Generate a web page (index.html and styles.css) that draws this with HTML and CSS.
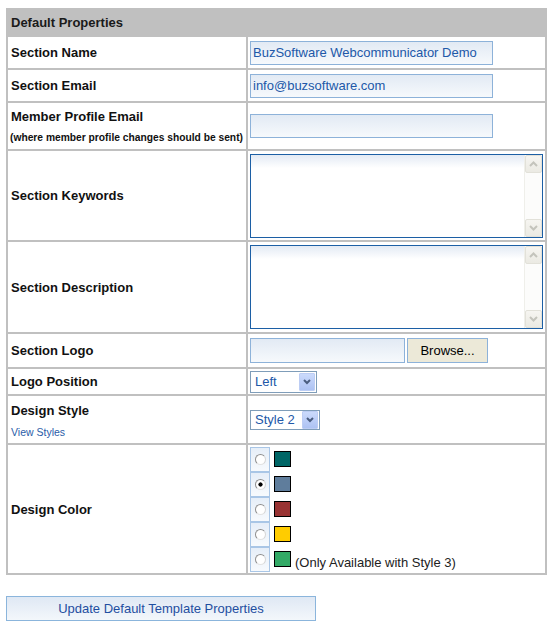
FILE: index.html
```html
<!DOCTYPE html>
<html>
<head>
<meta charset="utf-8">
<title>Default Properties</title>
<link rel="stylesheet" href="styles.css">
</head>
<body>
<form class="page">
<table class="props">
  <colgroup><col class="col-l"><col class="col-r"></colgroup>
  <tr class="h-head"><th colspan="2">Default Properties</th></tr>
  <tr class="h31">
    <td class="lbl">Section Name</td>
    <td class="fld"><input class="txt" type="text" value="BuzSoftware Webcommunicator Demo"></td>
  </tr>
  <tr class="h31">
    <td class="lbl">Section Email</td>
    <td class="fld"><input class="txt" type="text" value="info@buzsoftware.com"></td>
  </tr>
  <tr class="h46">
    <td class="lbl"><span class="title">Member Profile Email</span><span class="note">(where member profile changes should be sent)</span></td>
    <td class="fld"><input class="txt" type="text" value=""></td>
  </tr>
  <tr class="h89">
    <td class="lbl">Section Keywords</td>
    <td class="fld">
      <div class="ta">
        <textarea></textarea>
        <div class="sb">
          <span class="sbtn"><svg width="9" height="6" viewBox="0 0 9 6"><polyline points="1,5 4.5,1.5 8,5" fill="none" stroke="#c4c4bc" stroke-width="2"/></svg></span>
          <span class="sbtn"><svg width="9" height="6" viewBox="0 0 9 6"><polyline points="1,1 4.5,4.5 8,1" fill="none" stroke="#c4c4bc" stroke-width="2"/></svg></span>
        </div>
      </div>
    </td>
  </tr>
  <tr class="h90">
    <td class="lbl">Section Description</td>
    <td class="fld">
      <div class="ta">
        <textarea></textarea>
        <div class="sb">
          <span class="sbtn"><svg width="9" height="6" viewBox="0 0 9 6"><polyline points="1,5 4.5,1.5 8,5" fill="none" stroke="#c4c4bc" stroke-width="2"/></svg></span>
          <span class="sbtn"><svg width="9" height="6" viewBox="0 0 9 6"><polyline points="1,1 4.5,4.5 8,1" fill="none" stroke="#c4c4bc" stroke-width="2"/></svg></span>
        </div>
      </div>
    </td>
  </tr>
  <tr class="h33">
    <td class="lbl">Section Logo</td>
    <td class="fld"><div class="filerow"><input class="txt file" type="text" value=""><button type="button" class="browse">Browse...</button></div></td>
  </tr>
  <tr class="h25">
    <td class="lbl">Logo Position</td>
    <td class="fld">
      <div class="sel sel-pos"><span class="val">Left</span><span class="arr"><svg width="8" height="6" viewBox="0 0 8 6"><polyline points="1,1 4,4 7,1" fill="none" stroke="#4a5d80" stroke-width="2"/></svg></span></div>
    </td>
  </tr>
  <tr class="h47">
    <td class="lbl"><span class="title">Design Style</span><a class="link" href="#">View Styles</a></td>
    <td class="fld">
      <div class="sel sel-style"><span class="val">Style 2</span><span class="arr"><svg width="8" height="6" viewBox="0 0 8 6"><polyline points="1,1 4,4 7,1" fill="none" stroke="#4a5d80" stroke-width="2"/></svg></span></div>
    </td>
  </tr>
  <tr class="h128">
    <td class="lbl">Design Color</td>
    <td class="fld">
      <div class="colors">
        <label class="opt"><span class="rb"><input type="radio" name="color"></span><span class="sw c1"></span></label>
        <label class="opt"><span class="rb"><input type="radio" name="color" checked></span><span class="sw c2"></span></label>
        <label class="opt"><span class="rb"><input type="radio" name="color"></span><span class="sw c3"></span></label>
        <label class="opt"><span class="rb"><input type="radio" name="color"></span><span class="sw c4"></span></label>
        <label class="opt"><span class="rb"><input type="radio" name="color"></span><span class="sw c5"></span><span class="only">(Only Available with Style 3)</span></label>
      </div>
    </td>
  </tr>
</table>
<button type="button" class="update">Update Default Template Properties</button>
</form>
</body>
</html>
```

FILE: styles.css
```css
html, body {
  background: #ffffff;
}
body {
  margin: 8px 5px 0 6px;
  font-family: "Liberation Sans", Arial, sans-serif;
  font-size: 13px;
  color: #111111;
}
.page {
  margin: 0;
}
.props {
  width: 541px;
  border-collapse: separate;
  border-spacing: 2px;
  background: #c0c0c0;
  table-layout: fixed;
}
.col-l { width: 238px; }
.col-r { width: 297px; }
.props th {
  background: #c0c0c0;
  text-align: left;
  font-weight: bold;
  padding: 0 3px;
  color: #1a1a1a;
  font-size: 13px;
}
.props td {
  background: #ffffff;
  vertical-align: middle;
}
.h-head { height: 25px; }
.h31 { height: 31px; }
.h46 { height: 46px; }
.h89 { height: 89px; }
.h90 { height: 90px; }
.h33 { height: 33px; }
.h25 { height: 25px; }
.h47 { height: 47px; }
.h128 { height: 128px; }

td.lbl {
  padding: 1px 3px 0 3px;
  font-weight: bold;
  line-height: 16px;
}
td.fld {
  padding: 0 2px;
}
.title {
  display: block;
  line-height: 16px;
}
.note {
  display: block;
  margin-top: 7px;
  font-size: 10.25px;
  line-height: 12px;
  margin-left: -1px;
}
.link {
  display: block;
  margin-top: 7px;
  font-size: 10.5px;
  line-height: 12px;
  font-weight: normal;
  color: #2a5ca8;
  text-decoration: none;
}

.txt {
  display: block;
  box-sizing: border-box;
  width: 243px;
  height: 24px;
  margin: 0;
  padding: 0 2px;
  border: 1px solid #8db2d9;
  background: linear-gradient(#e2eaf4, #f6f9fc);
  font-family: "Liberation Sans", Arial, sans-serif;
  font-size: 13px;
  color: #2158a8;
  outline: none;
}
.filerow {
  display: flex;
  gap: 2px;
  align-items: center;
}
.txt.file {
  width: 155px;
  height: 25px;
}
.browse {
  box-sizing: border-box;
  width: 81px;
  height: 25px;
  margin: 0;
  padding: 0;
  border: 1px solid #8db2d9;
  background: #ece9d8;
  font-family: "Liberation Sans", Arial, sans-serif;
  font-size: 13px;
  color: #000000;
}

.ta {
  box-sizing: border-box;
  width: 293px;
  height: 84px;
  border: 1px solid #1c5fa5;
  display: flex;
}
.ta textarea {
  flex: 1;
  min-width: 0;
  margin: 0;
  border: none;
  padding: 2px;
  resize: none;
  overflow: hidden;
  outline: none;
  background: linear-gradient(#e3eaf4, #ffffff 13px);
  font-family: "Liberation Sans", Arial, sans-serif;
  font-size: 13px;
}
.sb {
  width: 17px;
  display: flex;
  flex-direction: column;
  justify-content: space-between;
  background: #fcfcfb;
  border-left: 1px solid #efefea;
}
.sbtn {
  box-sizing: border-box;
  width: 17px;
  height: 18px;
  display: flex;
  align-items: center;
  justify-content: center;
  background: linear-gradient(#f6f5f1, #ebeae3);
  border: 1px solid #e2e1d9;
  border-radius: 2px;
}

.sel {
  box-sizing: border-box;
  display: flex;
  align-items: center;
  border: 1px solid #7f9db9;
  background: #ffffff;
  color: #2158a8;
}
.sel .val {
  flex: 1;
  padding-left: 4px;
  white-space: nowrap;
}
.sel-pos {
  width: 67px;
  height: 22px;
}
.sel-style {
  width: 70px;
  height: 20px;
}
.sel .arr {
  box-sizing: border-box;
  width: 16px;
  height: 18px;
  margin-right: 1px;
  display: flex;
  align-items: center;
  justify-content: center;
  background: linear-gradient(#cbdafc, #adc2f3);
  border: 1px solid #bccdf4;
  border-radius: 1px;
}

.colors {
  display: flex;
  flex-direction: column;
}
.opt {
  display: flex;
  align-items: center;
  height: 25px;
}
.rb {
  box-sizing: border-box;
  width: 20px;
  height: 25px;
  display: flex;
  align-items: center;
  justify-content: center;
  border: 1px solid #a9c6e6;
  background: linear-gradient(#e6eef8, #f7fafd);
}
.rb input {
  -webkit-appearance: none;
  appearance: none;
  box-sizing: border-box;
  width: 11px;
  height: 11px;
  margin: 0;
  border-radius: 50%;
  border: 1px solid;
  border-color: #8e8e8e #d6d6d6 #e2e2e2 #8e8e8e;
  background: #ffffff;
}
.rb input:checked {
  background: radial-gradient(circle, #000000 0, #000000 1.8px, #ffffff 2.4px);
}
.sw {
  box-sizing: border-box;
  width: 17px;
  height: 16px;
  margin-left: 4px;
  border: 1px solid #000000;
}
.c1 { background: #006666; }
.c2 { background: #5f7d9c; }
.c3 { background: #993333; }
.c4 { background: #ffcc00; }
.c5 { background: #33aa66; }
.only {
  align-self: flex-end;
  margin-left: 4px;
  margin-bottom: 1px;
  line-height: 16px;
  color: #222222;
  white-space: nowrap;
}

.update {
  display: block;
  box-sizing: border-box;
  width: 310px;
  height: 25px;
  margin: 21px 0 0 0;
  padding: 0;
  border: 1px solid #8bb5dc;
  background: linear-gradient(#dfe8f4, #f3f7fb);
  font-family: "Liberation Sans", Arial, sans-serif;
  font-size: 13px;
  color: #1f4ea0;
}
```
